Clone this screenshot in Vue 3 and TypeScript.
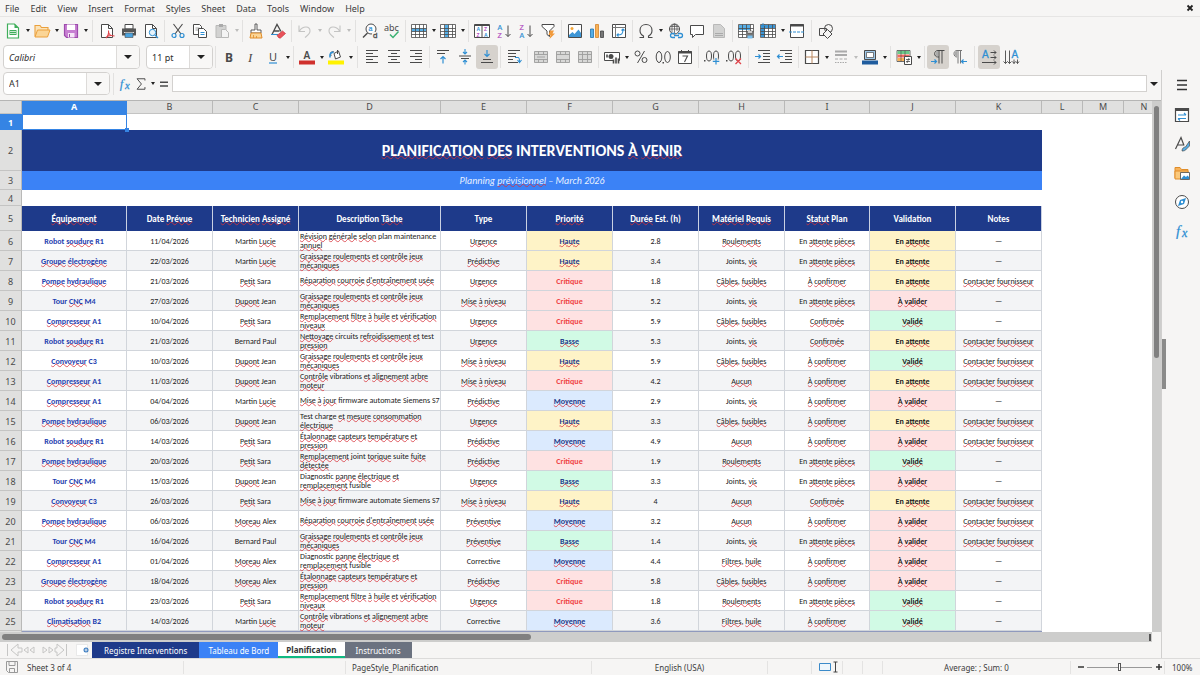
<script setup lang="ts">
import { ref } from 'vue'

interface Tool {
  icon?: string
  label?: string
  drop?: boolean
  on?: boolean
  dim?: boolean
  sep?: 'narrow' | 'wide'
}

const K = '#4a4a4a'
const B = '#2f8fd3'
const G = '#b9b9b8'

const table = (a: string, extra: string) =>
  `<rect x=".5" y="1.5" width="15" height="13" fill="#fff"/>${a}<path d="M.5 1.5h15v13H.5zM.5 5.5h15M.5 8.5h15M.5 11.5h15M4.5 1.5v13M8.5 1.5v13M12.5 1.5v13" fill="none" stroke="${K}" stroke-width=".8"/>${extra}`
const lines = (rows: number[][], color = K) =>
  rows.map(([x, y, w]) => `<path d="M${x} ${y}h${w}" stroke="${color}"/>`).join('')
const sortGlyph = (x: number, y: number, letter: string, color: string) =>
  `<text x="${x}" y="${y}" font-size="7" font-family="Liberation Sans" fill="${color}" stroke="${color}" stroke-width=".2">${letter}</text>`
const merged = (mid: string) =>
  `<path d="M1 2.5h14v11H1z" fill="#d8d8d7"/><path d="M1.500 2.500h13v11h-13zM1.500 5.500h13M1.500 10.500h13M5.500 2.500v3M10.500 2.500v3M5.500 10.500v3M10.500 10.500v3${mid}" fill="none" stroke="#9d9d9c" stroke-width=".9"/>`

const icons: Record<string, string> = {
  newDoc: `<path d="M2.5 1h7l4 4v10h-11z" fill="#fff" stroke="#3fae5a" stroke-width="1.2"/><path d="M9.500 1v4h4z" fill="#3fae5a"/><path d="M4.500 7h7v5h-7z" fill="#3fae5a"/><path d="M5 8.500h6M5 10.500h6" stroke="#fff" stroke-width=".7"/>`,
  open: `<path d="M1 13.500V2.500h5l1.500 2H14v3" fill="#fbe3b8" stroke="#eba03c" stroke-width="1.100"/><path d="M1 14l2.500-7H16l-2.500 7z" fill="#fbd596" stroke="#eba03c"/>`,
  save: `<path d="M1.500 1.500h13v13h-11l-2-2z" fill="#c77fd2" stroke="#9d4bac" stroke-width="1.200"/><path d="M4 1.500h8v5.500H4z" fill="#fff"/><path d="M5 10h6.500v4.500H5z" fill="#f5e6f7"/><path d="M6.500 11v3" stroke="#9d4bac"/>`,
  pdf: `<path d="M2.500 1.500h7l4 4v9h-11z" fill="#fff" stroke="${K}"/><path d="M9.500 1.500v4h4" fill="none" stroke="${K}"/><path d="M7 15c2-2 3-4.500 2.500-7.500M9.500 9c.5 3 2.500 4 6 4M7 14.500c2-2 5-2.500 8.500-1.500" fill="none" stroke="#e0444b" stroke-width="1.100"/>`,
  print: `<path d="M4 1.500h8V6H4z" fill="#fff" stroke="${K}"/><path d="M1 5.500h14v7H1z" fill="#555"/><path d="M3 9.500h10" stroke="#ddd"/><path d="M4 10h8v4.500H4z" fill="#4ba3de" stroke="${K}" stroke-width=".6"/>`,
  preview: `<path d="M2.500 1.500h7l4 4v9h-11z" fill="#fff" stroke="${K}"/><path d="M9.500 1.500v4h4" fill="none" stroke="${K}"/><circle cx="9.500" cy="9.500" r="3.200" fill="#e7f3fb" stroke="${B}"/><path d="M12 12l3 3" stroke="${B}" stroke-width="1.300"/>`,
  cut: `<path d="M3.500 1l7.500 10M12.500 1L5 11" stroke="${K}" stroke-width="1.100"/><circle cx="4" cy="12.500" r="2" fill="none" stroke="${B}" stroke-width="1.200"/><circle cx="12" cy="12.500" r="2" fill="none" stroke="${B}" stroke-width="1.200"/>`,
  copy: `<path d="M1.500 1.500h6l2 2v8h-8z" fill="#fff" stroke="${K}"/><path d="M3.500 5h4M3.500 7h4" stroke="#888" stroke-width=".8"/><path d="M6.500 5.500h5l3 3v6h-8z" fill="#fff" stroke="${K}"/><path d="M8.500 9.500h4M8.500 11.500h4" stroke="${B}"/>`,
  paste: `<path d="M2 2.500h10v12H2z" fill="#d2d2d1" stroke="${G}"/><path d="M5 1h4v3H5z" fill="#aaa"/><path d="M7.500 6.500h4l3 3v5h-7z" fill="#f4f4f4" stroke="${G}"/>`,
  brush: `<path d="M7 1h2v6h4v3H3V7h4z" fill="#fff" stroke="${K}" stroke-width=".9"/><path d="M3 10h10l1 5H2z" fill="#fbd596" stroke="#e08d2a"/><path d="M5.500 15v-3M8.500 15v-2" stroke="#e08d2a" stroke-width=".8"/>`,
  clear: `<path d="M2 11.500L7 1.500l4 7M4 8h5.500" fill="none" stroke="${K}" stroke-width="1.300"/><path d="M1 11.500h7" stroke="${B}"/><path d="M7 12.500l5.500-4.500 3 2.500-5 4.500H9z" fill="#e9525a" stroke="#c93840" stroke-width=".7"/>`,
  undo: `<path d="M2 2.500v6h6M2.500 8C6 2.500 13 3 13 8c0 3-2.500 4.500-5 6.500" fill="none" stroke="#c4c4c3" stroke-width="1.100"/>`,
  redo: `<path d="M14 2.500v6H8M13.500 8C10 2.500 3 3 3 8c0 3 2.500 4.500 5 6.500" fill="none" stroke="#c4c4c3" stroke-width="1.100"/>`,
  find: `<circle cx="9" cy="6" r="5" fill="#fff" stroke="${K}"/><path d="M5.500 10L1 14.500" stroke="${K}" stroke-width="1.500"/><path d="M10 9h6v6h-6z" fill="#f6f5f4"/><text x="6.500" y="8" font-size="7" font-family="Liberation Sans" fill="${B}" stroke="${B}" stroke-width=".2">a</text><text x="11" y="15" font-size="8" font-family="Liberation Sans" fill="${K}" stroke="${K}" stroke-width=".3">d</text>`,
  spell: `<text x="0" y="8" font-size="9" font-family="Noto Sans" fill="${K}">abc</text><path d="M6 11.500l3 3 5.500-6" fill="none" stroke="#3bb273" stroke-width="1.500"/>`,
  rows: table(`<path d="M1 5.500h14v3H1z" fill="#56aee6"/>`, ''),
  cols: table(`<path d="M5 2h3.500v12H5z" fill="#56aee6"/>`, ''),
  sort: `<path d="M.5 1.500h15v13H.5z" fill="#fff" stroke="${K}"/><path d="M.5 2.500h15M8 2v12" stroke="${K}"/><g font-size="5" font-family="Liberation Sans" font-weight="700"><text x="2.500" y="8" fill="${B}">A</text><text x="2.500" y="14" fill="#b04bc0">Z</text><text x="10" y="8" fill="#b04bc0">Z</text><text x="10" y="14" fill="${B}">A</text></g>`,
  az: sortGlyph(1.5, 6.5, 'A', B) + sortGlyph(1.5, 14.5, 'Z', '#b04bc0') + `<path d="M12 2.500v11M9.500 11l2.500 2.500 2.500-2.500" fill="none" stroke="${K}"/>`,
  za: sortGlyph(1.5, 6.5, 'Z', '#b04bc0') + sortGlyph(1.5, 14.5, 'A', B) + `<path d="M12 2.500v11M9.500 11l2.500 2.500 2.500-2.500" fill="none" stroke="${K}"/>`,
  filter: `<path d="M2 1.500h12v2L9.500 8v5.500L7 11.500V8L2 3.500z" fill="#fff" stroke="${K}"/><path d="M10 7.500h4l-1.500 3H15L9.500 16l1-4H8.500z" fill="#f29a3a"/>`,
  image: `<path d="M1.500 1.500h13v13h-13z" fill="#fff" stroke="${K}"/><circle cx="5" cy="5.500" r="1.500" fill="#f4a63a"/><path d="M2 14v-2l3.500-3 2 2 4-4.500L14 10v4z" fill="#3d96d6"/>`,
  chart: `<path d="M1.500 6h3v8.500h-3z" fill="#56aee6" stroke="#2273ad" stroke-width=".8"/><path d="M6.500 1.500h3v13h-3z" fill="#f7b259" stroke="#d7842a" stroke-width=".8"/><path d="M11.500 8h3v6.500h-3z" fill="#777" stroke="#444" stroke-width=".8"/>`,
  pivot: `<path d="M1.500 1.500h13v13h-13z" fill="#fff" stroke="${K}"/><path d="M1.500 4.500h13M4.500 1.500v13" stroke="#777"/><path d="M6 12c5 0 6-1 6-6M10.500 7.500L12 6l1.500 1.500M7.500 10.500L6 12l1.500 1.500" fill="none" stroke="${B}" stroke-width="1.100"/>`,
  omega: `<path d="M1.500 14.500h4v-1.500C2.500 11.500 2 9.500 2 7.500 2 4 4.500 1.500 8 1.500s6 2.500 6 6c0 2-.5 4-3.500 5.500v1.500h4" fill="none" stroke="${K}" stroke-width="1.100"/>`,
  link: `<circle cx="7.500" cy="6" r="5" fill="none" stroke="${K}"/><path d="M2.500 6h10M7.500 1v10M3.500 3.500h8M5 9.500V3l2.500-2L10 3v5" fill="none" stroke="${K}" stroke-width=".7"/><path d="M8 10.500H5.500a2 2 0 000 4H8M11 10.500h2.500a2 2 0 010 4H11M7 12.500h5" fill="none" stroke="${B}" stroke-width="1.300"/>`,
  comment: `<path d="M1.500 2.500h13v9h-8l-3 3v-3h-2z" fill="#fff" stroke="${K}"/>`,
  headfoot: `<path d="M2.500 1.500h7l4 4v9h-11z" fill="#d2d2d1" stroke="${G}"/><path d="M4 12.500h8M4 10.500h8" stroke="#aaa"/>`,
  printArea: table(`<path d="M1 2h11v5H1z" fill="#56aee6"/>`, `<path d="M8 9.500h8v5H8z" fill="#777"/><path d="M9.500 8h5v2h-5z" fill="#fff" stroke="${K}" stroke-width=".6"/><path d="M9.500 12.500h5v3h-5z" fill="#7cc1ee"/>`),
  freeze: table(`<path d="M1 2h14v3H1zM1 2h4v12H1z" fill="#3d96d6"/>`, `<path d="M3 0v5M.5 2.500h5" stroke="${B}" stroke-width=".9"/>`),
  split: `<path d="M1.500 1.500h13v13h-13z" fill="#fff" stroke="${K}"/><path d="M1 2.500h14" stroke="${K}" stroke-width="2"/><path d="M0 9h16" stroke="${B}" stroke-dasharray="3 1"/>`,
  shapes: `<circle cx="10.500" cy="5.500" r="4" fill="none" stroke="${K}"/><path d="M1.500 5.500h7v7h-7z" fill="none" stroke="${K}"/><path d="M9.500 6.500L14 11l-4.500 4.500L5 11z" fill="#f6f5f4" stroke="${K}"/>`,
  bold: `<text x="4" y="12.500" font-size="12" font-weight="700" font-family="Noto Sans" fill="${K}">B</text>`,
  italic: `<text x="5" y="12.500" font-size="13" font-style="italic" font-family="Liberation Serif" fill="${K}">I</text>`,
  underline: `<text x="4" y="11.500" font-size="11" font-family="Noto Sans" fill="${K}">U</text><path d="M4 14h8" stroke="${B}" stroke-width="1.200"/>`,
  fontColor: `<text x="4.500" y="9.500" font-size="10" font-weight="600" font-family="Noto Sans" fill="${K}">A</text><path d="M0 11.500h16v4H0z" fill="#d0312d"/>`,
  fill: `<path d="M3 7c-1-4 1-5 3-4M6 4.500L10.500 2l2 6-5 2z" fill="#fff" stroke="${K}"/><path d="M2 8.500C1.500 4.500 3 3 5.500 3.500" fill="none" stroke="${B}" stroke-width="1.600"/><path d="M9.500 1v4" stroke="${K}"/><path d="M0 11.500h16v4H0z" fill="#fff200"/>`,
  left: lines([[2, 1.5, 12], [2, 4.5, 7], [2, 7.5, 12], [2, 10.5, 7], [2, 13.5, 12]]),
  center: lines([[2, 1.5, 12], [5, 4.5, 6], [2, 7.5, 12], [5, 10.5, 6], [2, 13.5, 12]]),
  right: lines([[2, 1.5, 12], [7, 4.5, 7], [2, 7.5, 12], [7, 10.5, 7], [2, 13.5, 12]]),
  top: lines([[2, 1.5, 12], [2, 4.5, 8]]) + `<path d="M8 14.500V8M5.500 10L8 7.500l2.500 2.500" fill="none" stroke="${B}" stroke-width="1.200"/>`,
  middle: lines([[2, 7, 12], [4, 9.5, 8]]) + `<path d="M8 0v5M6 3l2 2 2-2M8 15.500v-4.500M6 13l2-2 2 2" fill="none" stroke="${B}" stroke-width="1.100"/>`,
  bottom: lines([[4, 10.5, 8], [2, 13.5, 12]]) + `<path d="M8 1v6M5.500 5L8 7.500 10.500 5" fill="none" stroke="${B}" stroke-width="1.200"/>`,
  wrap: lines([[2, 1.5, 12], [2, 4.5, 8], [2, 7.5, 8], [2, 10.5, 5], [2, 13.5, 10]]) + `<path d="M9 8.500h3q1.500 0 1.500 4M11.500 11l2 2.500 2-2.500" fill="none" stroke="${B}" stroke-width="1.100"/>`,
  merge: merged('M4 8h8'),
  mergeCells: merged(''),
  unmerge: merged('M5.500 5.500v5M10.500 5.500v5'),
  currency: `<path d="M.5 3.500h15v8H.5z" fill="#fff" stroke="${K}"/><circle cx="7" cy="7.500" r="2.500" fill="${K}"/><path d="M9 8.500h6v6H9z" fill="#f6f5f4"/><path d="M9.500 10.500v4M12 8.500v6M14.500 9.500v5M3 5.500v3" stroke="${K}" stroke-width="1.600"/>`,
  percent: `<circle cx="4.500" cy="4.500" r="2.500" fill="none" stroke="${K}"/><circle cx="11.500" cy="11" r="2.500" fill="none" stroke="${K}"/><path d="M11.500 2l-7 12" stroke="${K}"/>`,
  number: `<ellipse cx="4" cy="8" rx="2.800" ry="5.500" fill="none" stroke="${K}"/><ellipse cx="12.500" cy="8" rx="2.800" ry="5.500" fill="none" stroke="${K}"/><path d="M7.500 13h1.500v1.500H7.500z" fill="${K}"/>`,
  date: `<path d="M1.500 2.500h13v12h-13z" fill="#fff" stroke="${K}"/><path d="M1 3.500h14" stroke="${K}" stroke-width="2"/><path d="M4.500 1v3M11.500 1v3" stroke="${K}"/><path d="M5.500 7h5L7.500 13" fill="none" stroke="${K}" stroke-width="1.100"/>`,
  addDec: `<ellipse cx="5" cy="7" rx="2.500" ry="5" fill="none" stroke="${K}"/><ellipse cx="12" cy="7" rx="2.500" ry="5" fill="none" stroke="${K}"/><path d="M0 11h1.500v1.500H0z" fill="${K}"/><path d="M12 9v6.500M8.800 12.300h6.500" stroke="#f6f5f4" stroke-width="3"/><path d="M12 9v6.500M8.800 12.300h6.500" stroke="${B}" stroke-width="1.200"/>`,
  delDec: `<ellipse cx="5" cy="7" rx="2.500" ry="5" fill="none" stroke="${K}"/><ellipse cx="12" cy="7" rx="2.500" ry="5" fill="none" stroke="${K}"/><path d="M0 11h1.500v1.500H0z" fill="${K}"/><path d="M9.500 9.500l5.500 5.500M15 9.500L9.500 15" stroke="#e0444b" stroke-width="1.300"/>`,
  indent: lines([[3, 1.5, 12], [8, 4.5, 7], [8, 7.5, 7], [8, 10.5, 7], [3, 13.5, 12]]) + `<path d="M0 7.500h5.500M3.500 5.500l2 2-2 2" fill="none" stroke="${B}" stroke-width="1.200"/>`,
  outdent: lines([[3, 1.5, 12], [8, 4.5, 7], [8, 7.5, 7], [8, 10.5, 7], [3, 13.5, 12]]) + `<path d="M6 7.500H.5M2.500 5.500l-2 2 2 2" fill="none" stroke="${B}" stroke-width="1.200"/>`,
  borders: `<path d="M1.500 1.500h13v13h-13z" fill="#fff" stroke="${K}" stroke-width="1.200"/><path d="M8 1.500v13M1.500 8h13" stroke="#ba875f"/>`,
  lineStyle: `<path d="M2 2.500h12M2 6h12" stroke="#aaa" stroke-width="1.800"/><path d="M2 10h12" stroke="#aaa" stroke-dasharray="3 1.500"/><path d="M2 13.500h12" stroke="#aaa" stroke-dasharray="1.500 1"/>`,
  borderColor: `<path d="M2.500 1.500h11v9h-11z" fill="#9fc9ea" stroke="${K}"/><path d="M4.500 3.500h7v5h-7z" fill="#fff" stroke="${K}" stroke-width=".7"/><path d="M0 11.500h16v4H0z" fill="#1f5c9e"/>`,
  cond: `<path d="M1 1.500h13v11H1z" fill="#fff" stroke="${K}" stroke-width=".8"/><path d="M1.500 2h12v3h-12z" fill="#6ccb8b"/><path d="M1.500 5.500h12v3h-12z" fill="#ef6b62"/><path d="M1.500 9h12v3h-12z" fill="#f7b259"/><path d="M5 1.500v11M9 1.500v11" stroke="${K}" stroke-width=".6"/><path d="M8.500 7.500h7v8h-7z" fill="#fff" stroke="${K}"/><path d="M10 10.500h4M10 12.500h4M13 9l-2 5" stroke="${K}" stroke-width=".8"/>`,
  ltr: `<path d="M14.500 1.500H8C3.500 1.500 3.500 8 8 8h1M9 1.500v13M12 1.500v13" fill="none" stroke="${K}"/><path d="M8 2C5 2 5 7.500 8 7.500z" fill="#aaa"/><path d="M1 12.500h5.500M4.500 10.500l2 2-2 2" fill="none" stroke="${B}" stroke-width="1.200"/>`,
  rtl: `<path d="M10 1.500H5C1 1.500 1 8 5 8M6 1.500v13M8.500 1.500v13" fill="none" stroke="#777"/><path d="M5 2C2 2 2 7.500 5 7.500z" fill="#aaa"/><path d="M15 12.500H9.500M11.500 10.500l-2 2 2 2" fill="none" stroke="${B}" stroke-width="1.200"/>`,
  textLtr: `<text x="1" y="9" font-size="10" font-family="Liberation Sans" fill="${B}" stroke="${B}" stroke-width=".3">A</text><path d="M9.500 3.500H15M13 1.500l2 2-2 2M9.500 8.500H15M13 6.500l2 2-2 2M1 13.500h14M13 11.500l2 2-2 2" fill="none" stroke="${K}"/>`,
  textTtb: `<text x="8.500" y="9" font-size="10" font-family="Liberation Sans" fill="${B}" stroke="${B}" stroke-width=".3">A</text><path d="M2.500 1.500v13M.5 12.500l2 2 2-2M6.500 1.500v13M4.500 12.500l2 2 2-2M11 10.500v4M9.500 12.500l1.500 2 1.500-2M14.500 10.500v4M13 12.500l1.500 2 1.500-2" fill="none" stroke="${K}" stroke-width=".9"/>`,
  fx: `<text x="2" y="12.500" font-size="15" font-style="italic" font-family="Liberation Serif" fill="${B}" stroke="${B}" stroke-width=".2">f</text><text x="8" y="13.500" font-size="12" font-style="italic" font-family="Liberation Serif" fill="${B}" stroke="${B}" stroke-width=".3">x</text>`,
  sigma: `<path d="M12.500 4V2H3.500l5 6-5 6h9v-2.500" fill="none" stroke="${K}" stroke-width="1.100"/>`,
  equals: `<path d="M4 6.200h8M4 10h8" stroke="${K}" stroke-width="1.400"/>`,
  menu: `<path d="M3 3.500h10M3 8h10M3 12.500h10" stroke="#333" stroke-width="1.500"/>`,
  props: `<path d="M1.500 1.500h13v13h-13z" fill="#fff" stroke="${K}" stroke-width="1.200"/><path d="M1 3h14" stroke="${K}" stroke-width="2"/><path d="M4 8h8M10 6l2 2M4 11.500h8M6 13.500l-2-2" fill="none" stroke="${B}" stroke-width="1.100"/>`,
  styles: `<path d="M1.500 13L7 1.500l3 8M3.500 9h6" fill="none" stroke="${K}" stroke-width="1.200"/><path d="M8 15c0-3 2-4 3.500-4L15.500 5v5l-3 3c-1 1.500-2.500 2-4.500 2z" fill="#56aee6" stroke="${K}" stroke-width=".7"/>`,
  gallery: `<path d="M1 13V2.500h5l1.500 2H14V7" fill="#f7b259" stroke="#e08d2a"/><path d="M1 14V6h13v8z" fill="#fbc97c" stroke="#e08d2a"/><path d="M6.500 7.500h9v7h-9z" fill="#fff" stroke="${K}" stroke-width=".8"/><path d="M7 14l3-3.500 2 1.500 1.500-1.500L15 12v2z" fill="${B}"/>`,
  compass: `<circle cx="8" cy="8" r="6.500" fill="#fff" stroke="${K}"/><path d="M12 4l-2 6-6 2 2-6z" fill="${B}"/><circle cx="8" cy="8" r="1.200" fill="#fff"/>`,
  saved: `<path d="M2.500 2.500h11v11h-9l-2-2zM5 2.500h6v4H5zM5.500 9.500h5v4h-5z" fill="none" stroke="#999"/>`
}

const sep = (kind: 'narrow' | 'wide' = 'narrow'): Tool => ({ sep: kind })
const t = (icon: string, label: string, more: Partial<Tool> = {}): Tool => ({ icon, label, ...more })

const standardBar: Tool[] = [
  t('newDoc', 'New', { drop: true }), t('open', 'Open', { drop: true }), t('save', 'Save', { drop: true }), sep('wide'),
  t('pdf', 'Export as PDF'), t('print', 'Print'), t('preview', 'Print Preview'), sep(),
  t('cut', 'Cut'), t('copy', 'Copy'), t('paste', 'Paste', { drop: true, dim: true }), sep(),
  t('brush', 'Clone Formatting'), t('clear', 'Clear Formatting'), sep(),
  t('undo', 'Undo', { drop: true, dim: true }), t('redo', 'Redo', { drop: true, dim: true }), sep('wide'),
  t('find', 'Find and Replace'), t('spell', 'Spelling'), sep(),
  t('rows', 'Row', { drop: true }), t('cols', 'Column', { drop: true }), sep(),
  t('sort', 'Sort'), t('az', 'Sort Ascending'), t('za', 'Sort Descending'), t('filter', 'AutoFilter'), sep(),
  t('image', 'Insert Image'), t('chart', 'Insert Chart'), t('pivot', 'Pivot Table'), sep(),
  t('omega', 'Special Character', { drop: true }), t('link', 'Hyperlink'), t('comment', 'Comment'), t('headfoot', 'Headers and Footers'), sep(),
  t('printArea', 'Print Area'), t('freeze', 'Freeze Rows and Columns', { drop: true }), t('split', 'Split Window'), sep('wide'),
  t('shapes', 'Draw Functions')
]

const formatBar: Tool[] = [
  sep(), t('bold', 'Bold'), t('italic', 'Italic'), t('underline', 'Underline', { drop: true }), sep(),
  t('fontColor', 'Font Color', { drop: true }), t('fill', 'Background Color', { drop: true }), sep('wide'),
  t('left', 'Align Left'), t('center', 'Center Horizontally'), t('right', 'Align Right'), sep(),
  t('top', 'Align Top'), t('middle', 'Center Vertically'), t('bottom', 'Align Bottom', { on: true }), sep(),
  t('wrap', 'Wrap Text'), sep(),
  t('merge', 'Merge and Center'), t('mergeCells', 'Merge Cells'), t('unmerge', 'Unmerge Cells'), sep(),
  t('currency', 'Currency', { drop: true }), t('percent', 'Percent'), t('number', 'Number'), t('date', 'Date'), sep(),
  t('addDec', 'Add Decimal Place'), t('delDec', 'Delete Decimal Place'), sep('wide'),
  t('indent', 'Increase Indent'), t('outdent', 'Decrease Indent'), sep(),
  t('borders', 'Borders', { drop: true }), t('lineStyle', 'Border Style', { drop: true, dim: true }), t('borderColor', 'Border Color', { drop: true }), sep(),
  t('cond', 'Conditional Formatting', { drop: true }), sep(),
  t('ltr', 'Left-To-Right', { on: true }), t('rtl', 'Right-To-Left'), sep('wide'),
  t('textLtr', 'Text Direction Left to Right', { on: true }), t('textTtb', 'Text Direction Top to Bottom')
]

const sidebar = [t('menu', 'Sidebar Settings'), t('props', 'Properties'), t('styles', 'Styles'), t('gallery', 'Gallery'), t('compass', 'Navigator'), t('fx', 'Functions')]
const menus = ['File', 'Edit', 'View', 'Insert', 'Format', 'Styles', 'Sheet', 'Data', 'Tools', 'Window', 'Help']
const letters = 'ABCDEFGHIJKLMN'.split('')

const fontName = ref('Calibri')
const fontSize = ref('11 pt')
const cellName = ref('A1')
const formula = ref('')
const zoomLevel = ref(50)

const known = new Set(
  ('Robot R1 Sara Martin Jean Tour M4 A1 Bernard Paul C3 B2 Alex plan maintenance circuits test En Joints vibrations ' +
    'firmware automate Siemens S7 Test charge joint suite fusible Diagnostic Corrective Critique Date Description Type ' +
    'Est Plan Validation Notes Planning March INTERVENTIONS').split(' ')
)

interface Piece { text: string; bad: boolean }
function pieces(value: string): Piece[] {
  return value.split(/([\s,.()]+)/).filter(Boolean).map(text => ({
    text,
    bad: /[A-Za-zÀ-ÿ]/.test(text) && !known.has(text) && text !== 'h'
  }))
}

const headers = ['Équipement', 'Date Prévue', 'Technicien Assigné', 'Description Tâche', 'Type', 'Priorité', 'Durée Est. (h)', 'Matériel Requis', 'Statut Plan', 'Validation', 'Notes']

const D = {
  rev: 'Révision générale selon plan maintenance\nannuel',
  gra: 'Graissage roulements et contrôle jeux\nmécaniques',
  rep: "Réparation courroie d'entraînement usée",
  rem: 'Remplacement filtre à huile et vérification\nniveaux',
  net: 'Nettoyage circuits refroidissement et test\npression',
  con: 'Contrôle vibrations et alignement arbre\nmoteur',
  maj: 'Mise à jour firmware automate Siemens S7',
  tes: 'Test charge et mesure consommation\nélectrique',
  eta: 'Étalonnage capteurs température et\npression',
  joi: 'Remplacement joint torique suite fuite\ndétectée',
  dia: 'Diagnostic panne électrique et\nremplacement fusible'
}
const CF = 'Contacter fournisseur'
const rows: string[][] = [
  ['Robot soudure R1', '11/04/2026', 'Martin Lucie', D.rev, 'Urgence', 'Haute', '2.8', 'Roulements', 'En attente pièces', 'En attente', '—'],
  ['Groupe électrogène', '22/03/2026', 'Martin Lucie', D.gra, 'Prédictive', 'Haute', '3.4', 'Joints, vis', 'En attente pièces', 'En attente', '—'],
  ['Pompe hydraulique', '21/03/2026', 'Petit Sara', D.rep, 'Urgence', 'Critique', '1.8', 'Câbles, fusibles', 'À confirmer', 'En attente', CF],
  ['Tour CNC M4', '27/03/2026', 'Dupont Jean', D.gra, 'Mise à niveau', 'Critique', '5.2', 'Joints, vis', 'En attente pièces', 'À valider', '—'],
  ['Compresseur A1', '10/04/2026', 'Petit Sara', D.rem, 'Urgence', 'Critique', '5.9', 'Câbles, fusibles', 'Confirmée', 'Validé', '—'],
  ['Robot soudure R1', '21/03/2026', 'Bernard Paul', D.net, 'Urgence', 'Basse', '5.3', 'Joints, vis', 'Confirmée', 'En attente', CF],
  ['Convoyeur C3', '10/03/2026', 'Dupont Jean', D.gra, 'Mise à niveau', 'Haute', '5.9', 'Câbles, fusibles', 'À confirmer', 'Validé', CF],
  ['Compresseur A1', '11/03/2026', 'Dupont Jean', D.con, 'Mise à niveau', 'Critique', '4.2', 'Aucun', 'À confirmer', 'En attente', CF],
  ['Compresseur A1', '04/04/2026', 'Martin Lucie', D.maj, 'Prédictive', 'Moyenne', '2.9', 'Joints, vis', 'À confirmer', 'À valider', '—'],
  ['Pompe hydraulique', '06/03/2026', 'Dupont Jean', D.tes, 'Urgence', 'Haute', '3.3', 'Câbles, fusibles', 'À confirmer', 'En attente', CF],
  ['Robot soudure R1', '14/03/2026', 'Petit Sara', D.eta, 'Prédictive', 'Moyenne', '4.9', 'Aucun', 'À confirmer', 'À valider', CF],
  ['Pompe hydraulique', '20/03/2026', 'Petit Sara', D.joi, 'Prédictive', 'Critique', '1.9', 'Roulements', 'En attente pièces', 'Validé', '—'],
  ['Tour CNC M4', '15/03/2026', 'Dupont Jean', D.dia, 'Urgence', 'Basse', '3.3', 'Joints, vis', 'En attente pièces', 'À valider', '—'],
  ['Convoyeur C3', '26/03/2026', 'Petit Sara', D.maj, 'Mise à niveau', 'Haute', '4', 'Aucun', 'Confirmée', 'En attente', CF],
  ['Pompe hydraulique', '06/03/2026', 'Moreau Alex', D.rep, 'Préventive', 'Moyenne', '3.2', 'Aucun', 'À confirmer', 'À valider', CF],
  ['Tour CNC M4', '16/04/2026', 'Bernard Paul', D.gra, 'Préventive', 'Basse', '1.4', 'Joints, vis', 'En attente pièces', 'À valider', CF],
  ['Compresseur A1', '01/04/2026', 'Moreau Alex', D.dia, 'Corrective', 'Moyenne', '4.4', 'Filtres, huile', 'À confirmer', 'À valider', '—'],
  ['Groupe électrogène', '18/04/2026', 'Moreau Alex', D.eta, 'Prédictive', 'Critique', '5.8', 'Câbles, fusibles', 'À confirmer', 'À valider', '—'],
  ['Robot soudure R1', '23/03/2026', 'Petit Sara', D.rem, 'Urgence', 'Critique', '1.8', 'Roulements', 'En attente pièces', 'Validé', '—'],
  ['Climatisation B2', '14/03/2026', 'Martin Lucie', D.con, 'Corrective', 'Moyenne', '3.6', 'Filtres, huile', 'À confirmer', 'Validé', '—']
]

const tones: Record<string, string> = {
  Haute: 'amber', Critique: 'rose', Basse: 'mint', Moyenne: 'sky',
  'En attente': 'amber', 'À valider': 'rose', Validé: 'mint'
}
function cellClass(col: number, value: string): string[] {
  if (col === 0) return ['equip']
  if (col === 3) return ['desc']
  if (col === 5) return ['prio', tones[value]]
  if (col === 9) return ['valid', tones[value]]
  return []
}

const tabs = [
  { name: 'Registre Interventions', tone: 'navy' },
  { name: 'Tableau de Bord', tone: 'azure' },
  { name: 'Planification', tone: 'current' },
  { name: 'Instructions', tone: 'slate' }
]
</script>

<template>
  <div class="window">
    <nav class="menubar">
      <button v-for="m in menus" :key="m" type="button">{{ m }}</button>
      <button class="close" type="button" aria-label="Close document">
        <svg width="8" height="8" viewBox="0 0 8 8"><path d="M1.500 1.500l5 5M6.500 1.500l-5 5" stroke="#222" stroke-width="1.800" /></svg>
      </button>
    </nav>

    <div class="toolbar standard">
      <template v-for="(tool, i) in standardBar" :key="i">
        <span v-if="tool.sep" class="sep" :class="tool.sep"></span>
        <template v-else>
          <button type="button" class="tool" :class="{ on: tool.on }" :aria-label="tool.label">
            <svg width="16" height="16" viewBox="0 0 16 16" v-html="icons[tool.icon!]"></svg>
          </button>
          <button v-if="tool.drop" type="button" class="drop" :class="{ dim: tool.dim }" :aria-label="tool.label + ' options'"><i></i></button>
        </template>
      </template>
    </div>

    <div class="toolbar format">
      <div class="combo font">
        <input v-model="fontName" aria-label="Font name" />
        <button type="button" aria-label="Show fonts"><i></i></button>
      </div>
      <div class="combo size">
        <input v-model="fontSize" aria-label="Font size" />
        <button type="button" aria-label="Show sizes"><i></i></button>
      </div>
      <template v-for="(tool, i) in formatBar" :key="i">
        <span v-if="tool.sep" class="sep" :class="tool.sep"></span>
        <template v-else>
          <button type="button" class="tool" :class="{ on: tool.on }" :aria-label="tool.label">
            <svg width="16" height="16" viewBox="0 0 16 16" v-html="icons[tool.icon!]"></svg>
          </button>
          <button v-if="tool.drop" type="button" class="drop" :class="{ dim: tool.dim }" :aria-label="tool.label + ' options'"><i></i></button>
        </template>
      </template>
    </div>

    <div class="body">
      <main class="main">
        <div class="formula-bar">
          <div class="combo name">
            <input v-model="cellName" aria-label="Name box" />
            <button type="button" aria-label="Show names"><i></i></button>
          </div>
          <span class="sep wide"></span>
          <button type="button" class="fbtn" aria-label="Function Wizard"><svg width="14" height="14" viewBox="0 0 16 16" v-html="icons.fx"></svg></button>
          <button type="button" class="fbtn" aria-label="Select Function"><svg width="14" height="14" viewBox="0 0 16 16" v-html="icons.sigma"></svg></button>
          <button type="button" class="drop" aria-label="Function options"><i></i></button>
          <button type="button" class="fbtn" aria-label="Formula"><svg width="16" height="16" viewBox="0 0 16 16" v-html="icons.equals"></svg></button>
          <input v-model="formula" class="formula" aria-label="Input line" />
          <button type="button" class="expand" aria-label="Expand formula bar"><i></i></button>
        </div>

        <div class="sheet-area">
          <div class="grid">
            <table class="sheet">
              <colgroup>
                <col class="c-head" />
                <col v-for="l in letters" :key="l" :class="'c-' + l" />
              </colgroup>
              <thead>
                <tr class="r-head">
                  <th></th>
                  <th v-for="l in letters" :key="l" scope="col" :class="{ picked: l === 'A' }">{{ l }}</th>
                </tr>
              </thead>
              <tbody>
                <tr class="r1">
                  <th scope="row" class="picked">1</th>
                  <td class="cursor"><span class="handle"></span></td>
                  <td colspan="13"></td>
                </tr>
                <tr class="r2">
                  <th scope="row">2</th>
                  <td colspan="11" class="banner"><span v-for="(p, i) in pieces('PLANIFICATION DES INTERVENTIONS À VENIR')" :key="i" :class="{ bad: p.bad }">{{ p.text }}</span></td>
                  <td colspan="3"></td>
                </tr>
                <tr class="r3">
                  <th scope="row">3</th>
                  <td colspan="11" class="subtitle"><span v-for="(p, i) in pieces('Planning prévisionnel – March 2026')" :key="i" :class="{ bad: p.bad }">{{ p.text }}</span></td>
                  <td colspan="3"></td>
                </tr>
                <tr class="r4">
                  <th scope="row">4</th>
                  <td colspan="14"></td>
                </tr>
                <tr class="r5">
                  <th scope="row">5</th>
                  <td v-for="h in headers" :key="h" class="title"><span v-for="(p, i) in pieces(h)" :key="i" :class="{ bad: p.bad }">{{ p.text }}</span></td>
                  <td colspan="3"></td>
                </tr>
                <tr v-for="(row, r) in rows" :key="r" class="data" :class="{ alt: r % 2 === 1 }">
                  <th scope="row">{{ r + 6 }}</th>
                  <td v-for="(value, c) in row" :key="c" class="cell" :class="cellClass(c, value)"><span v-for="(p, i) in pieces(value)" :key="i" :class="{ bad: p.bad }">{{ p.text }}</span></td>
                  <td colspan="3"></td>
                </tr>
                <tr class="total">
                  <th scope="row"></th>
                  <td colspan="11" class="total-fill"></td>
                  <td colspan="3"></td>
                </tr>
              </tbody>
            </table>
          </div>
          <div class="vscroll"><span></span></div>
        </div>
        <div class="hscroll"><span class="thumb"></span><span class="grip"></span></div>

        <div class="tabs">
          <svg class="nav" width="62" height="14" viewBox="0 0 62 14" fill="none" stroke="#c6c6c5">
            <path d="M1.500 1v12M12 1L5 7l7 6V9h4V5h-4zM22 4l-4 3 4 3zM28 4l-4 3 4 3zM37 4l4 3-4 3zM43 4l4 3-4 3zM51 1l7 6-7 6V9h-2V5h2zM60.500 1v12" />
          </svg>
          <button type="button" class="add" aria-label="Add sheet">
            <svg width="14" height="14" viewBox="0 0 14 14"><path d="M.500 1.500h11v11H.500z" fill="#fff" stroke="#ddd" stroke-width=".600" /><circle cx="10" cy="7" r="2.500" fill="#3b7cc0" /><path d="M10 5.500v3M8.500 7h3" stroke="#fff" stroke-width=".800" /></svg>
          </button>
          <button v-for="tab in tabs" :key="tab.name" type="button" class="tab" :class="tab.tone">{{ tab.name }}</button>
        </div>
      </main>

      <aside class="side">
        <span class="side-grip"></span>
        <button v-for="s in sidebar" :key="s.icon" type="button" :aria-label="s.label">
          <svg width="16" height="16" viewBox="0 0 16 16" v-html="icons[s.icon!]"></svg>
        </button>
      </aside>
    </div>

    <footer class="status">
      <div class="s-save"><svg width="16" height="16" viewBox="0 0 16 16" v-html="icons.saved"></svg></div>
      <div class="s-sheet">Sheet 3 of 4</div>
      <div class="s-gap"></div>
      <div class="s-style">PageStyle_Planification</div>
      <div class="s-lang">English (USA)</div>
      <div class="s-insert"></div>
      <div class="s-mode">
        <svg width="22" height="12" viewBox="0 0 22 12" fill="none"><path d="M1.500 2.500h11v7h-11z" stroke="#3b8ac9" fill="#eef6fc" /><path d="M15.500 1h4M17.500 1v10M15.500 11h4" stroke="#444" /></svg>
      </div>
      <div class="s-box"></div>
      <div class="s-box"></div>
      <div class="s-sum">Average: ; Sum: 0</div>
      <div class="s-zoom">
        <button type="button" aria-label="Zoom out"><svg width="8" height="8" viewBox="0 0 8 8"><path d="M1 4h6" stroke="#333" stroke-width="1.500" /></svg></button>
        <input v-model="zoomLevel" type="range" min="0" max="100" aria-label="Zoom" />
        <button type="button" aria-label="Zoom in"><svg width="8" height="8" viewBox="0 0 8 8"><path d="M1 4h6M4 1v6" stroke="#333" stroke-width="1.500" /></svg></button>
      </div>
      <div class="s-pct">100%</div>
    </footer>
  </div>
</template>

<style>
html,
body {
  margin: 0;
  background: #f6f5f4;
}
</style>

<style scoped>
.window {
  display: flex;
  flex-direction: column;
  height: 100vh;
  overflow: hidden;
  background: #f6f5f4;
  color: #3c3c3c;
  font-family: "Noto Sans", sans-serif;
  font-size: 9px;
}
.window * {
  box-sizing: border-box;
}
button {
  display: flex;
  align-items: center;
  justify-content: center;
  flex: none;
  padding: 0;
  border: 0;
  background: none;
  color: inherit;
  font: inherit;
}
svg {
  display: block;
  flex: none;
  overflow: visible;
}
input {
  min-width: 0;
  margin: 0;
  border: 0;
  outline: 0;
  font: inherit;
}
.menubar {
  display: flex;
  flex: none;
  align-items: center;
  gap: 11px;
  height: 17px;
  padding: 0 6px 0 5px;
  border-bottom: 1px solid #e6e5e4;
}
.close {
  margin-left: auto;
}
.toolbar {
  display: flex;
  flex: none;
  align-items: center;
  height: 27px;
  padding-left: 2px;
}
.format {
  height: 26px;
  padding-left: 3px;
}
.tool {
  width: 22px;
  height: 24px;
  border-radius: 3px;
}
.tool.on {
  background: #d6d2cd;
}
.drop {
  width: 7px;
  height: 22px;
}
i {
  width: 0;
  height: 0;
  border: 3px solid transparent;
  border-top: 3px solid #222;
  border-bottom: 0;
}
.drop i {
  border-width: 3px 2px 0;
}
.dim i {
  border-top-color: #bdbdbc;
}
.sep {
  flex: none;
  width: 5px;
  height: 22px;
  background: linear-gradient(#e2e1e0, #e2e1e0) center / 1px 100% no-repeat;
}
.sep.wide {
  width: 7px;
}
.combo {
  display: flex;
  flex: none;
  height: 24px;
  border: 1px solid #d3d1cf;
  border-radius: 4px;
  background: #fff;
  overflow: hidden;
}
.combo input {
  flex: 1;
  padding: 0 5px;
  background: none;
  color: #2e2e2e;
}
.combo button {
  width: 23px;
  border-left: 1px solid #dddbd9;
  background: #f8f7f6;
}
.combo i,
.expand i {
  border-width: 4px 4px 0;
}
.font {
  width: 137px;
  margin-right: 6px;
}
.font input {
  font-style: italic;
}
.size {
  width: 67px;
}
.name {
  width: 107px;
  height: 23px;
}
.body {
  display: flex;
  flex: 1;
  min-height: 0;
}
.main {
  display: flex;
  flex: 1;
  flex-direction: column;
  min-width: 0;
}
.formula-bar {
  display: flex;
  flex: none;
  align-items: center;
  height: 30px;
  padding: 0 0 3px 3px;
}
.fbtn {
  width: 16px;
  height: 20px;
}
.formula {
  flex: 1;
  height: 17px;
  border: 1px solid #d3d1cf;
  background: #fff;
}
.expand {
  width: 14px;
}
.sheet-area {
  display: flex;
  flex: 1;
  min-height: 0;
  border-top: 1px solid #b5b5b4;
}
.grid {
  flex: 1;
  min-width: 0;
  background: #fff;
  overflow: hidden;
}
.sheet {
  width: 1165px;
  border-spacing: 0;
  table-layout: fixed;
}
.c-head { width: 22px; }
.c-A { width: 105px; }
.c-B, .c-C, .c-E, .c-F, .c-G, .c-H, .c-J, .c-K { width: 86px; }
.c-I { width: 85px; }
.c-D { width: 142px; }
.c-L, .c-M, .c-N { width: 41px; }
th {
  padding: 0;
  border-right: 1px solid #b9b9b8;
  border-bottom: 1px solid #c4c4c3;
  background: #e0e0df;
  color: #4a4a4a;
  font-size: 9px;
  font-weight: 400;
  line-height: 12px;
}
tbody th {
  padding-top: 2px;
}
th.picked {
  border-color: #3584e4;
  background: #3584e4;
  color: #fff;
  font-weight: 700;
}
td {
  padding: 0;
  text-align: center;
  white-space: pre;
  font-family: Carlito, Lato, sans-serif;
  font-size: 8px;
  line-height: 9px;
  color: #1a1a1a;
}
.r-head { height: 13px; }
.r1 { height: 16px; }
.r2 { height: 41px; }
.r3 { height: 19px; }
.r4 { height: 16px; }
.r5 { height: 25px; }
.data { height: 20px; }
.total { height: 20px; }
.cursor {
  position: relative;
  outline: 1px solid #3584e4;
  outline-offset: -1px;
}
.handle {
  position: absolute;
  right: -2px;
  bottom: -2px;
  width: 4px;
  height: 4px;
  background: #3584e4;
}
.banner {
  background: #1e3a8a;
  color: #fff;
  font-size: 16px;
  font-weight: 700;
  line-height: 20px;
}
.subtitle {
  background: #3b82f6;
  color: #e8f0ff;
  font-size: 10px;
  font-style: italic;
  line-height: 12px;
}
.title {
  border-right: 1px solid #c9d0e2;
  background: #1e3a8a;
  color: #fff;
  font-size: 9px;
  font-weight: 700;
}
.cell {
  padding-top: 1px;
  border-right: 1px solid #d1d5db;
  border-bottom: 1px solid #d1d5db;
}
.alt .cell { background: #f3f4f6; }
.equip {
  color: #1e40af;
  font-weight: 700;
}
.desc {
  padding: 0 0 0 1px;
  text-align: left;
}
.prio,
.valid {
  font-weight: 700;
}
.prio { color: #1e3a8a; }
.data .amber { background: #fef3c7; }
.data .rose { background: #fee2e2; }
.data .mint { background: #d1fae5; }
.data .sky { background: #dbeafe; }
.prio.rose { color: #ef4444; }
.bad {
  text-decoration: underline wavy #d8323acc 1px;
  text-decoration-skip-ink: none;
  text-underline-offset: -1px;
}
.total-fill { background: #8f99bd; }
.vscroll {
  flex: none;
  width: 9px;
  padding: 5px 2px 0;
  background: #cdcdcc;
}
.vscroll span {
  display: block;
  height: 48%;
  border-radius: 3px;
  background: #808080;
}
.hscroll {
  display: flex;
  flex: none;
  align-items: center;
  justify-content: space-between;
  height: 10px;
  margin-right: 9px;
  padding: 0 1px 0 2px;
  background: #cdcdcc;
}
.thumb {
  width: 46%;
  height: 6px;
  border-radius: 3px;
  background: #808080;
}
.grip {
  width: 2px;
  height: 7px;
  background: #555;
}
.tabs {
  display: flex;
  flex: none;
  align-items: center;
  height: 16px;
  padding-left: 6px;
}
.add {
  width: 16px;
  margin: 0 1px 0 7px;
}
.tab {
  height: 16px;
  padding: 0 12px;
  color: #fff;
  font-size: 8px;
}
.navy { background: #1e3a8a; }
.azure {
  padding: 0 9px;
  background: #3b82f6;
}
.slate {
  padding: 0 11px;
  background: #6b7280;
}
.current {
  padding: 0 8px;
  border-bottom: 2px solid #10b981;
  background: #fff;
  color: #333;
  font-weight: 700;
}
.side {
  position: relative;
  display: flex;
  flex: none;
  flex-direction: column;
  align-items: center;
  gap: 13px;
  width: 39px;
  padding: 7px 0 0 2px;
  border-left: 1px solid #d0cfce;
}
.side button {
  width: 22px;
  height: 16px;
}
.side button:first-of-type {
  margin-bottom: 1px;
}
.side-grip {
  position: absolute;
  left: 0;
  top: 269px;
  width: 4px;
  height: 50px;
  background: #8b8b8a;
}
.status {
  display: flex;
  flex: none;
  align-items: center;
  height: 17px;
  border-top: 1px solid #dcdbda;
  font-size: 8px;
}
.status > div {
  display: flex;
  flex: none;
  align-items: center;
  height: 13px;
  border-right: 1px solid #e4e3e2;
}
.status .s-save {
  width: 24px;
  padding-left: 4px;
  border: 0;
}
.s-sheet { width: 160px; padding-left: 3px; }
.s-gap { width: 162px; }
.status .s-style { flex: 1; padding-left: 6px; }
.s-lang { width: 176px; justify-content: center; }
.s-insert { width: 44px; }
.s-mode { width: 31px; padding-left: 6px; }
.s-box { width: 20px; }
.s-sum { width: 188px; justify-content: center; }
.s-zoom { width: 94px; gap: 2px; padding: 0 1px 0 5px; }
.s-zoom button {
  width: 9px;
}
.s-zoom input {
  flex: 1;
  height: 12px;
  appearance: none;
  background: linear-gradient(#999, #999) center / 100% 1px no-repeat;
}
.s-zoom input::-webkit-slider-thumb {
  appearance: none;
  width: 3px;
  height: 8px;
  border: 1px solid #555;
  background: #fff;
}
.status .s-pct {
  width: 35px;
  padding-left: 7px;
  border: 0;
}
</style>
